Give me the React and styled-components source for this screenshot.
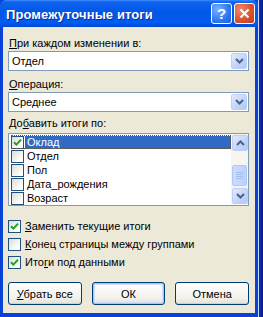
import React from "react";
import styled, { createGlobalStyle } from "styled-components";

const GlobalStyle = createGlobalStyle`
    html, body {
        margin: 0;
        padding: 0;
        background: #0a1f9e;
    }
    body {
        font-family: "Liberation Sans", Arial, sans-serif;
        font-size: 11px;
        color: #000;
    }
`

const Screen = styled.div`
    display: flex;
    width: 263px;
    height: 317px;
    overflow: hidden;
`

const Dialog = styled.div`
    display: flex;
    flex-direction: column;
    width: 258px;
    height: 317px;
    background: #0842d6;
`

const BackEdge = styled.div`
    flex: 1;
    border-left: 1px solid #c8d8f8;
    background: linear-gradient(to right, #1030b8, #061a8c);
`

const TitleBar = styled.div`
    display: flex;
    align-items: center;
    height: 27px;
    padding: 0 3px 0 6px;
    border-radius: 6px 6px 0 0;
    background: linear-gradient(
        #3d8dff 0,
        #0f62ec 2px,
        #0058e8 45%,
        #005cf0 85%,
        #0048d4 100%
    );
`

const Title = styled.div`
    flex: 1;
    color: #fff;
    font-weight: bold;
    font-size: 13px;
    letter-spacing: 0.1px;
    padding-top: 2px;
    text-shadow: 1px 1px 0 #0a2a9a;
`

const CaptionButton = styled.div`
    display: flex;
    align-items: center;
    justify-content: center;
    width: 21px;
    height: 21px;
    margin-left: 2px;
    box-sizing: border-box;
    border: 1px solid #fff;
    border-radius: 3px;
    color: #fff;
    font-weight: bold;
    font-size: 15px;
    background: ${p => p.$close
        ? "radial-gradient(circle at 30% 30%, #f08a6a, #d8502a 60%, #c23c16)"
        : "radial-gradient(circle at 30% 30%, #7ab0ff, #2f78f0 60%, #1a5fe0)"};
`

const Body = styled.div`
    flex: 1;
    display: flex;
    flex-direction: column;
    margin: 0 3px 4px 3px;
    padding: 10px 6px 0 5px;
    background: #ece9d8;
`

const Label = styled.div`
    height: 13px;
    line-height: 13px;
    margin-bottom: ${p => p.$gap || 1}px;
    padding-left: 1px;
`

const Key = styled.span`
    text-decoration: underline;
    text-underline-offset: 1px;
`

const Combo = styled.div`
    display: flex;
    align-items: stretch;
    height: 20px;
    box-sizing: border-box;
    border: 1px solid #7f9db9;
    background: #fff;
    margin-bottom: ${p => p.$gap}px;
`

const ComboText = styled.div`
    flex: 1;
    padding-left: 3px;
    line-height: 18px;
`

const ArrowButton = styled.div`
    display: flex;
    align-items: center;
    justify-content: center;
    width: 16px;
    height: 16px;
    margin: 1px;
    box-sizing: border-box;
    border: 1px solid #bcd0f6;
    border-radius: 2px;
    background: linear-gradient(135deg, #e2ebfe, #c1d3fb 60%, #b4c8f6);
`

const ListArea = styled.div`
    display: flex;
    height: 73px;
    box-sizing: border-box;
    border: 1px solid #7f9db9;
    background: #fff;
    margin-bottom: 13px;
`

const Rows = styled.div`
    flex: 1;
    padding: 1px 0 0 2px;
`

const Row = styled.div`
    display: flex;
    align-items: center;
    height: 14px;
    outline: ${p => p.$focus ? "1px dotted #555" : "none"};
    outline-offset: -1px;
`

const RowText = styled.div`
    flex: 1;
    height: 13px;
    line-height: 13px;
    padding-left: 2px;
    margin-left: 1px;
    background: ${p => p.$selected ? "#316ac5" : "transparent"};
    color: ${p => p.$selected ? "#fff" : "#000"};
`

const Scrollbar = styled.div`
    display: flex;
    flex-direction: column;
    width: 17px;
    background: #f6f5f0;
`

const Track = styled.div`
    flex: 1;
    display: flex;
    flex-direction: column;
    justify-content: flex-end;
    padding: 0 1px;
`

const Thumb = styled.div`
    display: flex;
    align-items: center;
    justify-content: center;
    height: 21px;
    margin-bottom: 1px;
    box-sizing: border-box;
    border: 1px solid #b0c6f4;
    border-radius: 2px;
    background: linear-gradient(to right, #cfdcfd, #bcd0fa);
`

const Box = styled.div`
    display: flex;
    align-items: center;
    justify-content: center;
    width: 13px;
    height: 13px;
    flex-shrink: 0;
    box-sizing: border-box;
    border: 1px solid #1c5180;
    background: linear-gradient(135deg, #dcdcd5, #fff 80%);
`

const Options = styled.div`
    display: flex;
    flex-direction: column;
    gap: 4px;
    margin-bottom: 13px;
`

const Option = styled.div`
    display: flex;
    align-items: center;
    gap: 4px;
    height: 14px;
`

const Buttons = styled.div`
    display: flex;
    gap: 10px;
`

const Button = styled.div`
    display: flex;
    align-items: center;
    justify-content: center;
    width: 74px;
    height: 23px;
    box-sizing: border-box;
    border: 1px solid #003c74;
    border-radius: 3px;
    background: linear-gradient(#fff, #f3f2ec 70%, #e3e1d6);
    box-shadow: ${p => p.$default
        ? "inset 0 0 0 1px #a9c4f5, inset 0 0 0 2px #cfdefa"
        : "inset 0 -1px 0 #d6d0c0"};
`

const Check = ({ on }) => (
    <Box>
        {on && (
            <svg width="9" height="9" viewBox="0 0 9 9">
                <path d="M1 4.2 L3.4 6.6 L8 1.6" fill="none" stroke="#21a121" strokeWidth="2" />
            </svg>
        )}
    </Box>
)

const Chevron = ({ up }) => (
    <svg width="9" height="6" viewBox="0 0 9 6">
        <path
            d={up ? "M1 5 L4.5 1.5 L8 5" : "M1 1 L4.5 4.5 L8 1"}
            fill="none"
            stroke="#4d6185"
            strokeWidth="2"
        />
    </svg>
)

const fields = ["Оклад", "Отдел", "Пол", "Дата_рождения", "Возраст"]

const App = () => {
    return (
        <>
            <GlobalStyle />
            <Screen>
                <Dialog>
                    <TitleBar>
                        <Title>Промежуточные итоги</Title>
                        <CaptionButton>?</CaptionButton>
                        <CaptionButton $close>
                            <svg width="11" height="11" viewBox="0 0 11 11">
                                <path d="M1.5 1.5 L9.5 9.5 M9.5 1.5 L1.5 9.5" stroke="#fff" strokeWidth="2" />
                            </svg>
                        </CaptionButton>
                    </TitleBar>

                    <Body>
                        <Label><Key>П</Key>ри каждом изменении в:</Label>
                        <Combo $gap={7}>
                            <ComboText>Отдел</ComboText>
                            <ArrowButton><Chevron /></ArrowButton>
                        </Combo>

                        <Label><Key>О</Key>перация:</Label>
                        <Combo $gap={5}>
                            <ComboText>Среднее</ComboText>
                            <ArrowButton><Chevron /></ArrowButton>
                        </Combo>

                        <Label $gap={3}>До<Key>б</Key>авить итоги по:</Label>
                        <ListArea>
                            <Rows>
                                {fields.map((name, i) => (
                                    <Row key={name} $focus={i === 0}>
                                        <Check on={i === 0} />
                                        <RowText $selected={i === 0}>{name}</RowText>
                                    </Row>
                                ))}
                            </Rows>
                            <Scrollbar>
                                <ArrowButton><Chevron up /></ArrowButton>
                                <Track>
                                    <Thumb>
                                        <svg width="7" height="7" viewBox="0 0 7 7">
                                            <path d="M0 0.5 H7 M0 2.5 H7 M0 4.5 H7 M0 6.5 H7" stroke="#a6bff0" />
                                        </svg>
                                    </Thumb>
                                </Track>
                                <ArrowButton><Chevron /></ArrowButton>
                            </Scrollbar>
                        </ListArea>

                        <Options>
                            <Option><Check on /><span><Key>З</Key>аменить текущие итоги</span></Option>
                            <Option><Check /><span><Key>К</Key>онец страницы между группами</span></Option>
                            <Option><Check on /><span>Ито<Key>г</Key>и под данными</span></Option>
                        </Options>

                        <Buttons>
                            <Button><span><Key>У</Key>брать все</span></Button>
                            <Button $default>ОК</Button>
                            <Button>Отмена</Button>
                        </Buttons>
                    </Body>
                </Dialog>
                <BackEdge />
            </Screen>
        </>
    );
}

export default App
